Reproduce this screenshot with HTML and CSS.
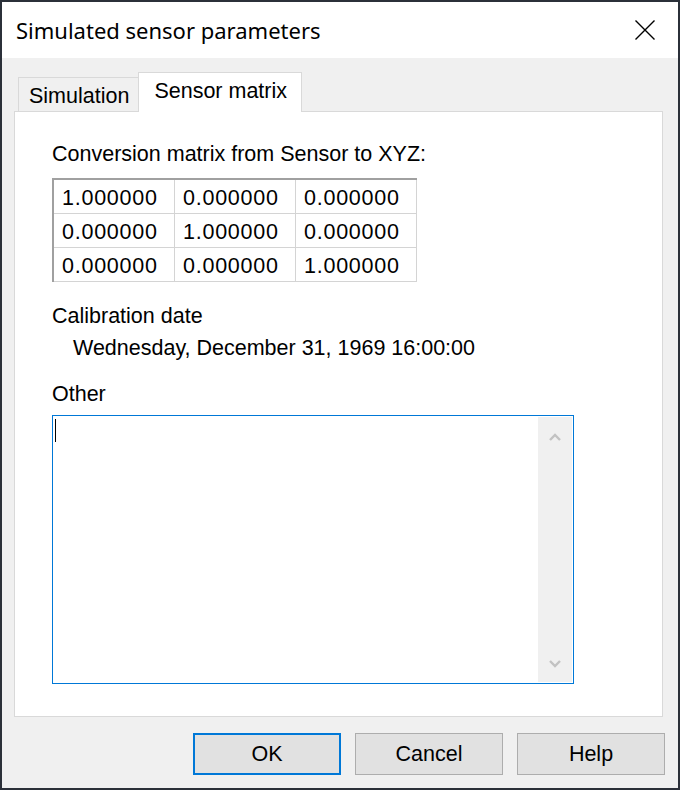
FILE: index.html
```html
<!DOCTYPE html>
<html lang="en">

<head>
  <meta charset="UTF-8">
  <title>Simulated sensor parameters</title>
  <link rel="stylesheet" href="styles.css">
</head>

<body>
  <div class="window">
    <div class="titlebar">
      <span class="title">Simulated sensor parameters</span>
      <button class="close-btn" aria-label="Close">
        <svg width="22" height="22" viewBox="0 0 22 22">
          <path d="M1.5 1.5 L20.5 20.5 M20.5 1.5 L1.5 20.5" stroke="#000" stroke-width="1.4" fill="none" />
        </svg>
      </button>
    </div>

    <div class="client">
      <div class="tabs">
        <div class="tab">Simulation</div>
        <div class="tab active">Sensor matrix</div>
      </div>

      <div class="panel">
        <div class="label">Conversion matrix from Sensor to XYZ:</div>
        <table class="matrix">
          <tr>
            <td>1.000000</td>
            <td>0.000000</td>
            <td>0.000000</td>
          </tr>
          <tr>
            <td>0.000000</td>
            <td>1.000000</td>
            <td>0.000000</td>
          </tr>
          <tr>
            <td>0.000000</td>
            <td>0.000000</td>
            <td>1.000000</td>
          </tr>
        </table>

        <div class="label section">Calibration date</div>
        <div class="date">Wednesday, December 31, 1969 16:00:00</div>

        <div class="label section">Other</div>
        <div class="memo">
          <div class="memo-text"><span class="caret"></span></div>
          <div class="scrollbar">
            <svg width="14" height="10" viewBox="0 0 14 10">
              <path d="M2 8 L7 3 L12 8" stroke="#c2c2c2" stroke-width="2.4" fill="none" />
            </svg>
            <svg width="14" height="10" viewBox="0 0 14 10">
              <path d="M2 2 L7 7 L12 2" stroke="#c2c2c2" stroke-width="2.4" fill="none" />
            </svg>
          </div>
        </div>
      </div>

      <div class="buttons">
        <button class="btn default">OK</button>
        <button class="btn">Cancel</button>
        <button class="btn">Help</button>
      </div>
    </div>
  </div>
</body>

</html>
```

FILE: styles.css
```css
body {
  margin: 0;
  padding: 0;
  font-family: 'Liberation Sans', Arial, sans-serif;
  font-size: 21.5px;
  color: #000;
  background-color: #2b3039;
}

.window {
  width: 680px;
  height: 790px;
  box-sizing: border-box;
  border: 2px solid #2b3039;
  display: flex;
  flex-direction: column;
  background-color: #f0f0f0;
}

.titlebar {
  flex-shrink: 0;
  height: 56px;
  background-color: white;
  display: flex;
  align-items: center;
  justify-content: space-between;
  padding-left: 14px;
  padding-right: 22px;
}

.title {
  font-family: 'Noto Sans', 'Open Sans', sans-serif;
  font-size: 22px;
  padding-bottom: 1px;
}

.close-btn {
  border: none;
  background: none;
  padding: 0;
  width: 22px;
  height: 22px;
  display: flex;
}

.client {
  flex: 1;
  display: flex;
  flex-direction: column;
}

.tabs {
  display: flex;
  align-items: flex-end;
  margin-top: 14px;
  padding-left: 16px;
  margin-bottom: -1px;
}

.tab {
  height: 27px;
  border: 1px solid #d9d9d9;
  border-bottom: none;
  border-right: none;
  padding: 7px 9px 0 10px;
  line-height: 22px;
}

.tab.active {
  height: 32px;
  background-color: white;
  border-right: 1px solid #d9d9d9;
  padding: 7px 14px 0 15px;
  position: relative;
  z-index: 1;
}

.panel {
  height: 606px;
  box-sizing: border-box;
  margin: 0 15px 0 12px;
  background-color: white;
  border: 1px solid #d9d9d9;
  padding: 30px 0 0 37px;
}

.label {
  line-height: 24px;
}

.section {
  margin-top: 22px;
}

.matrix {
  margin-top: 12px;
  border-collapse: collapse;
  border-top: 2px solid #a0a0a0;
  border-left: 2px solid #a0a0a0;
  border-right: 1px solid #d4d4d4;
  border-bottom: 1px solid #d4d4d4;
}

.matrix td {
  width: 112px;
  height: 29px;
  padding: 4px 0 0 8px;
  border: 1px solid #d4d4d4;
  line-height: 1;
  letter-spacing: 0.75px;
}

.date {
  margin-top: 8px;
  margin-left: 21px;
  line-height: 24px;
}

.memo {
  margin-top: 9px;
  width: 520px;
  height: 267px;
  border: 1px solid #0078d7;
  display: flex;
}

.memo-text {
  flex: 1;
  padding: 3px 0 0 2px;
}

.caret {
  display: block;
  width: 1px;
  height: 23px;
  background-color: #000;
}

.scrollbar {
  width: 34px;
  margin: 1px 1px 1px 0;
  background-color: #f0f0f0;
  display: flex;
  flex-direction: column;
  justify-content: space-between;
  align-items: center;
  padding: 15px 0 13px;
}

.buttons {
  display: flex;
  justify-content: flex-end;
  gap: 14px;
  margin-top: 16px;
  padding-right: 13px;
}

.btn {
  width: 148px;
  height: 42px;
  font-family: 'Liberation Sans', Arial, sans-serif;
  font-size: 21.5px;
  background-color: #e1e1e1;
  border: 1px solid #adadad;
  color: #000;
  padding: 0;
}

.btn.default {
  border: 2px solid #0078d7;
}
```
